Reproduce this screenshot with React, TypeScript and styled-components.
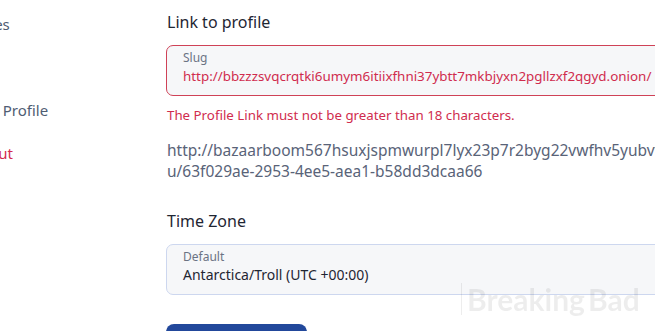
import styled, { createGlobalStyle } from 'styled-components';

const GlobalStyle = createGlobalStyle`
	html, body {
		margin: 0;
		padding: 0;
		background: #ffffff;
		overflow: hidden;
	}
	body {
		font-family: 'Noto Sans', 'Open Sans', Arial, sans-serif;
		width: 655px;
		height: 331px;
	}
`;

const sideItems = [
	{ label: 'Trades', danger: false },
	{ label: 'Bids', danger: false },
	{ label: 'Shop Profile', danger: false },
	{ label: 'Logout', danger: true },
];

function App() {
	return (
		<>
			<GlobalStyle />
			<Page>
				<Sidebar>
					{sideItems.map((item) => (
						<SideLink key={item.label} $danger={item.danger}>
							{item.label}
						</SideLink>
					))}
				</Sidebar>
				<Main>
					<SectionTitle>Link to profile</SectionTitle>
					<Field $error>
						<FieldLabel>Slug</FieldLabel>
						<FieldValue $error>
							http://bbzzzsvqcrqtki6umym6itiixfhni37ybtt7mkbjyxn2pgllzxf2qgyd.onion/
						</FieldValue>
					</Field>
					<ErrorText>The Profile Link must not be greater than 18 characters.</ErrorText>
					<ProfileUrl>
						http://bazaarboom567hsuxjspmwurpl7lyx23p7r2byg22vwfhv5yubvvqd.onion/
						<wbr />
						u/63f029ae-2953-4ee5-aea1-b58dd3dcaa66
					</ProfileUrl>
					<SectionTitle $spaced>Time Zone</SectionTitle>
					<Field>
						<FieldLabel>Default</FieldLabel>
						<FieldValue>Antarctica/Troll (UTC +00:00)</FieldValue>
					</Field>
					<SaveButton>Save</SaveButton>
				</Main>
			</Page>
			<Watermark>
				<WatermarkBar />
				Breaking<WatermarkGap />Bad
			</Watermark>
		</>
	);
}

const Page = styled.div`
	display: flex;
	margin-left: -37px;
`;

const Sidebar = styled.nav`
	display: flex;
	flex-direction: column;
	gap: 20px;
	width: 203px;
	flex-shrink: 0;
	padding-top: 13px;
`;

const SideLink = styled.a<{ $danger?: boolean }>`
	font-size: 15px;
	line-height: 23px;
	white-space: nowrap;
	color: ${(p) => (p.$danger ? '#d42b4f' : '#4f5d73')};
	cursor: pointer;
`;

const Main = styled.main`
	display: flex;
	flex-direction: column;
	align-items: flex-start;
	width: 560px;
	flex-shrink: 0;
	padding-top: 10px;
`;

const SectionTitle = styled.h3<{ $spaced?: boolean }>`
	margin: ${(p) => (p.$spaced ? '27px' : '0')} 0 11px 1px;
	font-size: 16px;
	line-height: 24px;
	font-weight: 400;
	color: #1f2633;
`;

const Field = styled.div<{ $error?: boolean }>`
	box-sizing: border-box;
	display: flex;
	flex-direction: column;
	width: 100%;
	padding: 4px 16px 9px;
	border: 1px solid ${(p) => (p.$error ? '#cf4257' : '#cdd7ef')};
	border-radius: 7px;
	background: #f6f7f9;
`;

const FieldLabel = styled.span`
	font-size: 12px;
	line-height: 16px;
	color: #6b7384;
`;

const FieldValue = styled.span<{ $error?: boolean }>`
	font-size: ${(p) => (p.$error ? '13.4px' : '14px')};
	line-height: 20px;
	white-space: nowrap;
	color: ${(p) => (p.$error ? '#d02c4e' : '#1f2633')};
`;

const ErrorText = styled.p`
	margin: 10px 0 0 1px;
	font-size: 13.3px;
	line-height: 18px;
	color: #d02c4e;
`;

const ProfileUrl = styled.p`
	margin: 16px 0 0 1px;
	width: 100%;
	font-size: 15.5px;
	line-height: 21px;
	color: #596378;
`;

const SaveButton = styled.button`
	margin-top: 29px;
	width: 141px;
	height: 40px;
	border: none;
	border-radius: 8px;
	background: #22489b;
	color: #ffffff;
	font-family: inherit;
	font-size: 14px;
`;

const Watermark = styled.div`
	position: fixed;
	left: 461px;
	top: 282px;
	display: flex;
	align-items: center;
	white-space: nowrap;
	font-family: Lato, 'Noto Sans', sans-serif;
	font-weight: 700;
	font-size: 30px;
	line-height: 34px;
	color: rgba(0, 0, 0, 0.07);
	pointer-events: none;
`;

const WatermarkBar = styled.span`
	width: 1px;
	height: 32px;
	margin-right: 5px;
	background: rgba(0, 0, 0, 0.07);
`;

const WatermarkGap = styled.span`
	width: 3px;
`;

export default App;
